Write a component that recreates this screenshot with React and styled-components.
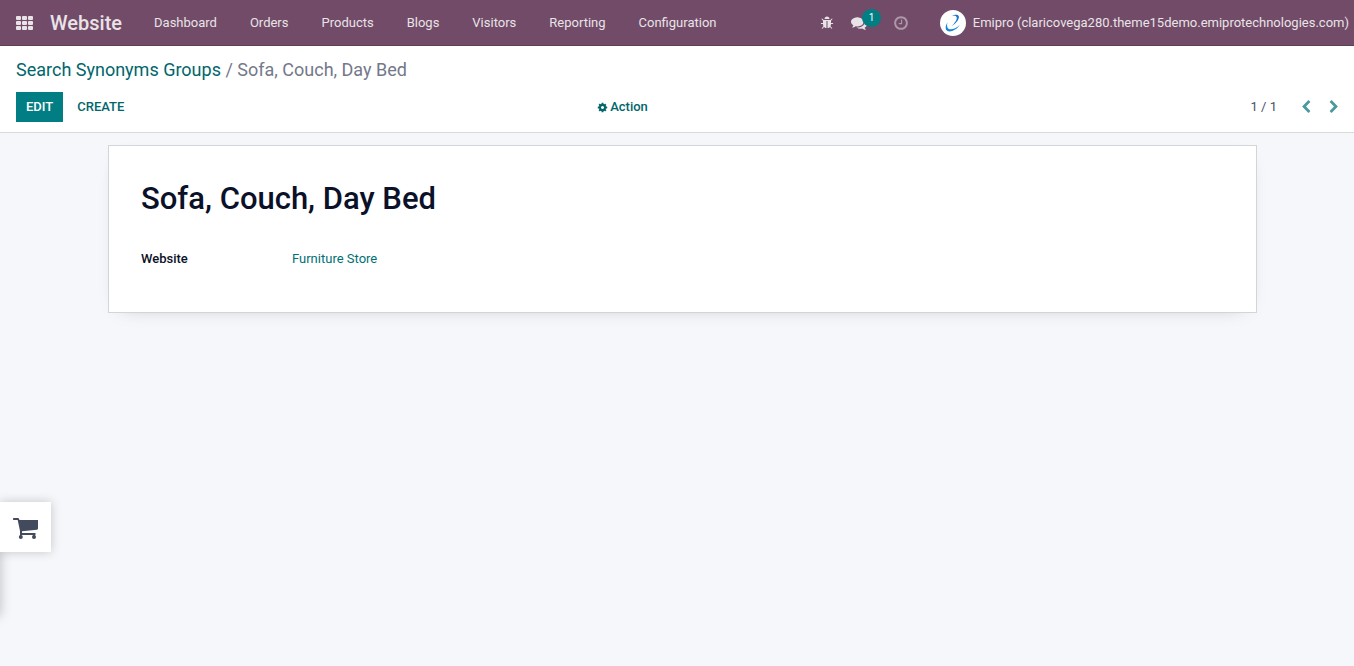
import React from "react";
import styled, { createGlobalStyle } from "styled-components";

const GlobalStyle = createGlobalStyle`
  *, *::before, *::after { box-sizing: border-box; }
  body {
    margin: 0;
    background: #f5f7fb;
    color: #0a1128;
    font-family: Roboto, "Liberation Sans", sans-serif;
    font-size: 13px;
    line-height: 20px;
  }
  a { text-decoration: none; color: inherit; }
  button { font: inherit; color: inherit; background: none; border: 0; padding: 0; cursor: pointer; }
`;

const Page = styled.div`
  position: relative;
  min-height: 100vh;
`;

const Navbar = styled.header`
  display: flex;
  align-items: center;
  justify-content: space-between;
  height: 46px;
  padding: 0 5px 0 16px;
  background: #714b67;
  border-bottom: 1px solid #5f3f57;
  color: #e9e3e8;
  white-space: nowrap;
`;

const NavGroup = styled.div`
  display: flex;
  align-items: center;
`;

const IconButton = styled.button`
  display: flex;
  align-items: center;
  position: relative;
  opacity: ${(p) => (p.$muted ? 0.5 : 1)};
`;

const Brand = styled.a`
  margin: 0 16px;
  font-size: 20px;
  line-height: 24px;
  font-weight: 500;
`;

const Menu = styled.nav`
  display: flex;
  gap: 1px;
`;

const MenuLink = styled.a`
  padding: 0 16px;
`;

const Systray = styled.div`
  display: flex;
  align-items: center;
  gap: 17px;
  margin-right: 31px;
`;

const MessagesButton = styled(IconButton)`
  margin-right: 9px;
`;

const Badge = styled.span`
  position: absolute;
  left: 11px;
  top: -6px;
  padding: 0 7px;
  border-radius: 9px;
  background: #017e84;
  color: #ffffff;
  font-size: 10px;
  line-height: 18px;
`;

const UserButton = styled.button`
  display: flex;
  align-items: center;
  gap: 7px;
`;

const Avatar = styled.span`
  display: flex;
  width: 26px;
  height: 26px;
  border-radius: 50%;
  background: #ffffff;
`;

const ControlPanel = styled.div`
  padding: 12px 13px 10px 16px;
  background: #ffffff;
  border-bottom: 1px solid #d8dade;
`;

const Breadcrumb = styled.nav`
  color: #74788a;
  font-size: 18px;
  line-height: 24px;
`;

const CrumbLink = styled.a`
  color: #01666b;
`;

const Toolbar = styled.div`
  display: grid;
  grid-template-columns: 1fr auto 1fr;
  align-items: center;
  margin-top: 10px;
`;

const Buttons = styled.div`
  display: flex;
  gap: 4px;
`;

const Button = styled.button`
  height: 30px;
  padding: 0 10px;
  font-weight: 500;
  background: ${(p) => (p.$primary ? "#017e84" : "transparent")};
  color: ${(p) => (p.$primary ? "#ffffff" : "#01666b")};
`;

const ActionButton = styled.button`
  display: flex;
  align-items: center;
  gap: 2px;
  margin-right: 112px;
  color: #01666b;
  font-weight: 500;
`;

const Pager = styled.div`
  display: flex;
  align-items: center;
  justify-content: flex-end;
  gap: 14px;
  color: #4c5163;
`;

const PagerValue = styled.span`
  margin-right: 8px;
`;

const PagerButton = styled(IconButton)`
  color: #4b999c;
`;

const Main = styled.main`
  padding: 12px 97px 12px 108px;
`;

const Sheet = styled.section`
  padding: 32px 32px 43px;
  background: #ffffff;
  border: 1px solid #d3d5dc;
  box-shadow: 0 5px 20px -15px rgba(0, 0, 0, 0.4);
`;

const Title = styled.h1`
  margin: 0;
  font-size: 31px;
  line-height: 42px;
  font-weight: 500;
`;

const Fields = styled.dl`
  display: grid;
  grid-template-columns: 151px 1fr;
  margin: 29px 0 0;
`;

const Label = styled.dt`
  font-weight: 500;
`;

const Value = styled.dd`
  margin: 0;
  color: #017075;
`;

const CartTab = styled.button`
  position: fixed;
  left: 0;
  bottom: 114px;
  display: flex;
  align-items: center;
  width: 51px;
  height: 50px;
  padding: 4px 0 0 13px;
  background: #ffffff;
  color: #434a5d;
  box-shadow: 0 0 10px rgba(0, 0, 0, 0.2);
`;

const DrawerEdge = styled.div`
  position: fixed;
  left: -10px;
  bottom: 50px;
  width: 10px;
  height: 80px;
  box-shadow: 0 0 12px rgba(0, 0, 0, 0.25);
`;

const Glyph = ({ d, size = 14 }) => (
  <svg width={size} height={size} viewBox="0 0 1792 1792" fill="currentColor" aria-hidden="true">
    <path d={d} />
  </svg>
);

const icons = {
  bug: "M1696 960q0 26-19 45t-45 19h-224q0 171-67 290l208 209q19 19 19 45t-19 45q-18 19-45 19t-45-19l-198-197q-5 5-15 13t-42 28.500-65 36.500-82 29-97 13v-896h-128v896q-51 0-101.500-13.500t-87-33-66-39-43.500-32.500l-15-14-183 207q-20 21-48 21-24 0-43-16-19-18-20.500-44.500t15.500-46.500l202-227q-58-114-58-274h-224q-26 0-45-19t-19-45 19-45 45-19h224v-294l-173-173q-19-19-19-45t19-45 45-19 45 19l173 173h844l173-173q19-19 45-19t45 19 19 45-19 45l-173 173v294h224q26 0 45 19t19 45zm-480-576h-640q0-133 93.500-226.500t226.500-93.500 226.500 93.500 93.500 226.500z",
  comments: "M1408 768q0 139-94 257t-256.500 186.500-353.500 68.500q-86 0-176-16-124 88-278 128-36 9-86 16h-3q-11 0-20.500-8t-11.500-21q-1-3-1-6.500t.5-6.500 2-6l2.500-5 3.500-5.500 4-5 4.500-5 4-4.500q5-6 23-25t26-29.500 22.500-29 25-38.500 20.500-44q-124-72-195-177t-71-224q0-139 94-257t256.500-186.500 353.500-68.500 353.500 68.500 256.500 186.500 94 257zm384 256q0 120-71 224.500t-195 176.500q10 24 20.500 44t25 38.500 22.500 29 26 29.500 23 25q1 1 4 4.500t4.500 5 4 5 3.500 5.500l2.500 5 2 6 .5 6.500-1 6.500q-3 14-13 22t-22 7q-50-7-86-16-154-40-278-128-90 16-176 16-271 0-472-132 58 4 88 4 161 0 309-45t264-129q125-92 192-212t67-254q0-77-23-152 129 71 204 178t75 230z",
  clock: "M1024 544v448q0 14-9 23t-23 9h-320q-14 0-23-9t-9-23v-64q0-14 9-23t23-9h224v-352q0-14 9-23t23-9h64q14 0 23 9t9 23zm416 352q0-148-73-273t-198-198-273-73-273 73-198 198-73 273 73 273 198 198 273 73 273-73 198-198 73-273zm224 0q0 209-103 385.500t-279.500 279.500-385.500 103-385.500-103-279.500-279.500-103-385.500 103-385.500 279.500-279.500 385.500-103 385.500 103 279.500 279.500 103 385.500z",
  cog: "M1152 896q0-106-75-181t-181-75-181 75-75 181 75 181 181 75 181-75 75-181zm512-109v222q0 12-8 23t-20 13l-185 28q-19 54-39 91 35 50 107 138 10 12 10 25t-9 23q-27 37-99 108t-94 71q-12 0-26-9l-138-108q-44 23-91 38-16 136-29 186-7 28-36 28h-222q-14 0-24.500-8.500t-11.500-21.500l-28-184q-49-16-90-37l-141 107q-10 9-25 9-14 0-25-11-126-114-165-168-7-10-7-23 0-12 8-23 15-21 51-66.500t54-70.500q-27-50-41-99l-183-27q-13-2-21-12.500t-8-23.500v-222q0-12 8-23t19-13l186-28q14-46 39-92-40-57-107-138-10-12-10-24 0-10 9-23 26-36 98.500-107.500t94.500-71.500q13 0 26 10l138 107q44-23 91-38 16-136 29-186 7-28 36-28h222q14 0 24.500 8.500t11.500 21.500l28 184q49 16 90 37l142-107q9-9 24-9 13 0 25 10 129 119 165 170 7 8 7 22 0 12-8 23-15 21-51 66.500t-54 70.500q26 50 41 98l183 28q13 2 21 12.500t8 23.500z",
  left: "M1427 301l-531 531 531 531q19 19 19 45t-19 45l-166 166q-19 19-45 19t-45-19l-742-742q-19-19-19-45t19-45l742-742q19-19 45-19t45 19l166 166q19 19 19 45t-19 45z",
  right: "M1363 877l-742 742q-19 19-45 19t-45-19l-166-166q-19-19-19-45t19-45l531-531-531-531q-19-19-19-45t19-45l166-166q19-19 45-19t45 19l742 742q19 19 19 45t-19 45z",
};

const GridIcon = () => (
  <svg width="18" height="14" viewBox="0 0 18 14" fill="currentColor" aria-hidden="true">
    {[0, 5, 10].map((y) =>
      [0, 6, 12].map((x) => <rect key={`${x}-${y}`} x={x} y={y} width="5" height="4" rx="1" />)
    )}
  </svg>
);

const EmiproLogo = () => (
  <svg width="26" height="26" viewBox="0 0 26 26" aria-hidden="true">
    <path d="M11.500 6.300C14 4.600 17.500 3.800 18.700 6C19.800 8.800 16.500 13 11.500 16.200C15 12.800 17.500 9.200 16.600 7C15.800 5.300 13.500 5.600 11.500 6.300Z" fill="#1b75d0" />
    <path d="M7.500 12.500C5.300 15.500 4.900 19.500 7.500 21C11 22.500 17 19.500 19.800 15C16.300 18.300 11 20.300 8.700 18.900C6.700 17.500 6.800 15 7.500 12.500Z" fill="#1687d4" />
  </svg>
);

const CartIcon = () => (
  <svg width="26" height="22" viewBox="0 0 26 22" fill="currentColor" aria-hidden="true">
    <path d="M0.500 0H5.500L6.500 2H25V10.500Q25 11.500 24 11.700L9 13.300V15H22.500V17H7V13L4.700 2H0.500Q0 2 0 1Q0 0 0.500 0Z" />
    <circle cx="7.800" cy="19" r="2" />
    <circle cx="21" cy="19" r="2" />
    <path d="M7 16H8.500V18H7ZM20 16H22V18H20Z" />
  </svg>
);

const menuItems = ["Dashboard", "Orders", "Products", "Blogs", "Visitors", "Reporting", "Configuration"];

export default function App() {
  return (
    <Page>
      <GlobalStyle />
      <Navbar>
        <NavGroup>
          <IconButton aria-label="Applications"><GridIcon /></IconButton>
          <Brand href="#">Website</Brand>
          <Menu>
            {menuItems.map((item) => <MenuLink key={item} href="#">{item}</MenuLink>)}
          </Menu>
        </NavGroup>
        <NavGroup>
          <Systray>
            <IconButton aria-label="Debug tools"><Glyph d={icons.bug} /></IconButton>
            <MessagesButton aria-label="Messages">
              <Glyph d={icons.comments} size={16} />
              <Badge>1</Badge>
            </MessagesButton>
            <IconButton aria-label="Activities" $muted><Glyph d={icons.clock} size={16} /></IconButton>
          </Systray>
          <UserButton>
            <Avatar><EmiproLogo /></Avatar>
            Emipro (claricovega280.theme15demo.emiprotechnologies.com)
          </UserButton>
        </NavGroup>
      </Navbar>
      <ControlPanel>
        <Breadcrumb aria-label="Breadcrumb">
          <CrumbLink href="#">Search Synonyms Groups</CrumbLink> / Sofa, Couch, Day Bed
        </Breadcrumb>
        <Toolbar>
          <Buttons>
            <Button $primary>EDIT</Button>
            <Button>CREATE</Button>
          </Buttons>
          <ActionButton><Glyph d={icons.cog} size={11} />Action</ActionButton>
          <Pager>
            <PagerValue>1 / 1</PagerValue>
            <PagerButton aria-label="Previous"><Glyph d={icons.left} /></PagerButton>
            <PagerButton aria-label="Next"><Glyph d={icons.right} /></PagerButton>
          </Pager>
        </Toolbar>
      </ControlPanel>
      <Main>
        <Sheet>
          <Title>Sofa, Couch, Day Bed</Title>
          <Fields>
            <Label>Website</Label>
            <Value><a href="#">Furniture Store</a></Value>
          </Fields>
        </Sheet>
      </Main>
      <DrawerEdge />
      <CartTab aria-label="Cart"><CartIcon /></CartTab>
    </Page>
  );
}
